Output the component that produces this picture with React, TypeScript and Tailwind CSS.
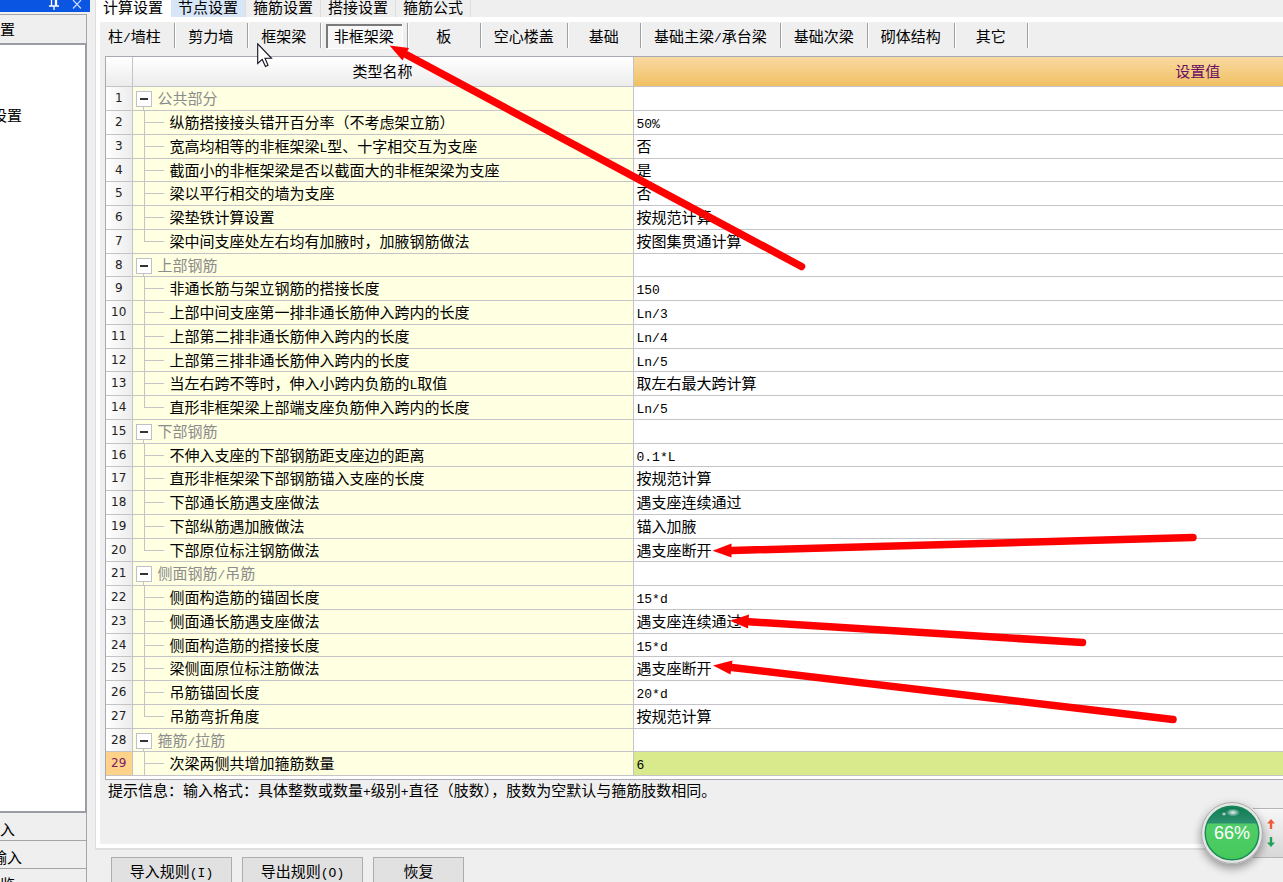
import { Fragment, useState } from "react";
import clsx from "clsx";

type Row = {
  name: string;
  value?: string;
  group?: boolean;
};

const mainTabs = ["计算设置", "节点设置", "箍筋设置", "搭接设置", "箍筋公式"];

const memberTypes = [
  "柱/墙柱",
  "剪力墙",
  "框架梁",
  "非框架梁",
  "板",
  "空心楼盖",
  "基础",
  "基础主梁/承台梁",
  "基础次梁",
  "砌体结构",
  "其它",
];

const rows: Row[] = [
  { name: "公共部分", group: true },
  { name: "纵筋搭接接头错开百分率（不考虑架立筋）", value: "50%" },
  { name: "宽高均相等的非框架梁L型、十字相交互为支座", value: "否" },
  { name: "截面小的非框架梁是否以截面大的非框架梁为支座", value: "是" },
  { name: "梁以平行相交的墙为支座", value: "否" },
  { name: "梁垫铁计算设置", value: "按规范计算" },
  { name: "梁中间支座处左右均有加腋时，加腋钢筋做法", value: "按图集贯通计算" },
  { name: "上部钢筋", group: true },
  { name: "非通长筋与架立钢筋的搭接长度", value: "150" },
  { name: "上部中间支座第一排非通长筋伸入跨内的长度", value: "Ln/3" },
  { name: "上部第二排非通长筋伸入跨内的长度", value: "Ln/4" },
  { name: "上部第三排非通长筋伸入跨内的长度", value: "Ln/5" },
  { name: "当左右跨不等时，伸入小跨内负筋的L取值", value: "取左右最大跨计算" },
  { name: "直形非框架梁上部端支座负筋伸入跨内的长度", value: "Ln/5" },
  { name: "下部钢筋", group: true },
  { name: "不伸入支座的下部钢筋距支座边的距离", value: "0.1*L" },
  { name: "直形非框架梁下部钢筋锚入支座的长度", value: "按规范计算" },
  { name: "下部通长筋遇支座做法", value: "遇支座连续通过" },
  { name: "下部纵筋遇加腋做法", value: "锚入加腋" },
  { name: "下部原位标注钢筋做法", value: "遇支座断开" },
  { name: "侧面钢筋/吊筋", group: true },
  { name: "侧面构造筋的锚固长度", value: "15*d" },
  { name: "侧面通长筋遇支座做法", value: "遇支座连续通过" },
  { name: "侧面构造筋的搭接长度", value: "15*d" },
  { name: "梁侧面原位标注筋做法", value: "遇支座断开" },
  { name: "吊筋锚固长度", value: "20*d" },
  { name: "吊筋弯折角度", value: "按规范计算" },
  { name: "箍筋/拉筋", group: true },
  { name: "次梁两侧共增加箍筋数量", value: "6" },
];

// Latin runs use a narrow mono face, half the width of a Chinese character
function Mixed({ text }: { text: string }) {
  return (
    <>
      {text.split(/([\x21-\x7e]+)/).map((part, i) =>
        i % 2 === 1 ? (
          <span
            key={i}
            className="font-['Liberation_Mono',monospace] text-[13px] leading-none"
          >
            {part}
          </span>
        ) : (
          <Fragment key={i}>{part}</Fragment>
        )
      )}
    </>
  );
}

function Sidebar() {
  return (
    <aside className="flex w-[90px] shrink-0 flex-col">
      <div className="flex h-3 items-start justify-end gap-3 bg-[#0a55e2] pr-2 text-white">
        <svg width="12" height="10" viewBox="0 0 12 10" fill="none" stroke="currentColor">
          <path d="M3.5 0V5.5M7.5 0V5.5M8.5 0V5.5M1 6H11M6 6V10" strokeWidth="1.3" />
        </svg>
        <svg width="10" height="9" viewBox="0 0 10 9" fill="none" stroke="#c9dcff">
          <path d="M1 0L9 8.5M9 0L1 8.5" strokeWidth="1.2" />
        </svg>
      </div>
      <div className="mr-[3px] flex flex-1 flex-col">
        <button className="mt-0.5 h-[29px] overflow-hidden border-t border-r border-[#a5a5a5] bg-[#efefef] text-left">
          置
        </button>
        <div className="flex-1 overflow-hidden border-t-2 border-r-2 border-b-2 border-[#9a9da3] bg-white pt-[60px]">
          <a href="#calc" className="-ml-2 block">
            设置
          </a>
        </div>
        <div className="h-[69px] overflow-hidden border-r border-[#a5a5a5]">
          <button className="block h-7 w-full border-b border-[#a5a5a5] pt-1 text-left">入</button>
          <button className="block h-7 w-full border-b border-[#a5a5a5] pt-1 text-left">
            <span className="-ml-2">输入</span>
          </button>
          <button className="block h-7 w-full pt-0.5 text-left">览</button>
        </div>
      </div>
    </aside>
  );
}

function TreeLine({ last }: { last: boolean }) {
  return (
    <span className="mr-1.5 ml-[11px] flex w-5 shrink-0 flex-col">
      <span className="h-3 border-b border-l border-[#c4c4c4]" />
      <span className={clsx("flex-1", !last && "border-l border-[#c4c4c4]")} />
    </span>
  );
}

function GroupToggle({ label }: { label: string }) {
  return (
    <span className="mr-1.5 ml-[3px] flex flex-col items-center pt-1">
      <button
        aria-label={label}
        className="flex size-4 shrink-0 items-center justify-center border border-[#c0c0cc] bg-white"
      >
        <span className="h-[2px] w-2 bg-[#333]" />
      </button>
      <span className="w-px flex-1 bg-[#c4c4c4]" />
    </span>
  );
}

function SettingsTable() {
  const [selected, setSelected] = useState(28);

  return (
    <div className="ml-[5px] overflow-hidden border-t border-b border-l border-[#a9a9b4] bg-white pb-[3px]">
      <table className="w-[1657px] table-fixed border-collapse">
        <colgroup>
          <col className="w-[26px]" />
          <col className="w-[501px]" />
          <col />
        </colgroup>
        <thead>
          <tr className="h-[29px] *:border-r *:border-b *:border-[#c3c3c8] *:p-0 *:font-normal">
            <th className="bg-linear-to-b from-white to-[#ececec]" />
            <th className="bg-linear-to-b from-white to-[#ececec]">类型名称</th>
            <th className="bg-linear-to-b from-[#f9d9a0] to-[#f0c062] text-[#6a0f62]">设置值</th>
          </tr>
        </thead>
        <tbody>
          {rows.map((row, i) => {
            const active = i === selected;
            const last = i < rows.length - 1 && !!rows[i + 1].group;
            const cell = clsx(
              "flex overflow-hidden border-b border-[#c3c3c8] whitespace-nowrap",
              i % 4 === 3 ? "h-[23px]" : "h-6"
            );
            return (
              <tr key={i} onClick={() => setSelected(i)} className="*:p-0">
                <td
                  className={clsx(
                    "border-r border-[#c3c3c8]",
                    active
                      ? "bg-[#ffd28a] text-[#7a2060]"
                      : "bg-linear-to-r from-white to-[#ececec] text-[#222]"
                  )}
                >
                  <div
                    className={clsx(
                      cell,
                      "items-center justify-center font-['DejaVu_Sans',sans-serif] text-[12px]"
                    )}
                  >
                    {i + 1}
                  </div>
                </td>
                <td className="border-r border-[#c3c3c8] bg-[#ffffe1]">
                  <div className={cell}>
                    {row.group ? <GroupToggle label={row.name} /> : <TreeLine last={last} />}
                    <span className={clsx("self-center", row.group && "text-[#8c8c8c]")}>
                      <Mixed text={row.name} />
                    </span>
                  </div>
                </td>
                <td className={active ? "bg-[#d9ea8c]" : "bg-white"}>
                  <div className={clsx(cell, "items-center pl-[3px]")}>
                    <span>
                      <Mixed text={row.value ?? ""} />
                    </span>
                  </div>
                </td>
              </tr>
            );
          })}
        </tbody>
      </table>
    </div>
  );
}

// Red hand-placed arrows pointing at the important settings
function Annotations() {
  return (
    <svg
      className="pointer-events-none absolute top-0 left-0"
      width="1283"
      height="882"
      viewBox="0 0 1283 882"
      fill="#ff0000"
      stroke="#ff0000"
      strokeLinecap="round"
    >
      <g strokeWidth="7.5">
        <path d="M801.5 266.5L407 55" />
        <path d="M1193 537.5L732 550.5" />
        <path d="M1082.5 642.5L749 621.8" />
        <path d="M1173 719.5L732 667.5" />
      </g>
      <g stroke="none">
        <path d="M389.5 45.5L409 48L402.5 60.5Z" />
        <path d="M712.5 550.7L731.5 543.5V557.5Z" />
        <path d="M730 620.7L749 614.5L748 628.5Z" />
        <path d="M713 665.5L732.5 660.5L730.5 674.5Z" />
      </g>
    </svg>
  );
}

function Cursor() {
  return (
    <svg
      className="pointer-events-none absolute top-[43px] left-[257px]"
      width="16"
      height="25"
      viewBox="0 0 16 25"
    >
      <path
        d="M.7 .8V20.5L5.2 16.4L8.5 23.5L11 22.3L8 15.3H14.5Z"
        fill="#fff"
        stroke="#111122"
        strokeWidth="1.1"
      />
    </svg>
  );
}

function SpeedBall() {
  return (
    <div className="absolute right-0 bottom-[18px] flex items-center">
      <div className="relative z-10 -mr-2.5 flex size-[62px] items-center justify-center rounded-full shadow-[0_4px_10px_rgba(0,0,0,0.4)]">
        <svg className="absolute inset-0" width="62" height="62" viewBox="0 0 62 62">
          <defs>
            <linearGradient id="ballTop" x1="0" y1="0" x2="0" y2="1">
              <stop offset="0" stopColor="#0d7a55" />
              <stop offset="1" stopColor="#2f9070" />
            </linearGradient>
            <linearGradient id="ballBody" x1="0" y1="0" x2="0" y2="1">
              <stop offset="0" stopColor="#56cf70" />
              <stop offset="1" stopColor="#45c95a" />
            </linearGradient>
            <radialGradient id="ballShine">
              <stop offset="0" stopColor="#fff" stopOpacity="0.9" />
              <stop offset="1" stopColor="#fff" stopOpacity="0" />
            </radialGradient>
          </defs>
          <circle cx="31" cy="31" r="30.5" fill="#e6e6e6" stroke="#a8a8a8" />
          <circle cx="31" cy="31" r="27" fill="url(#ballBody)" />
          <path d="M5.8 21.5A27 27 0 0 1 56.2 21.5Z" fill="url(#ballTop)" />
          <circle cx="31" cy="31" r="26.8" fill="none" stroke="#188a58" strokeWidth="1.4" />
          <ellipse cx="32" cy="10.5" rx="7" ry="4" fill="url(#ballShine)" />
          <ellipse cx="23" cy="12" rx="2.5" ry="2" fill="url(#ballShine)" />
        </svg>
        <span className="relative font-['Liberation_Sans',sans-serif] text-lg text-white">66%</span>
      </div>
      <div className="flex h-[50px] w-[30px] flex-col items-center justify-center gap-2 border-t border-b border-[#b5b5b5] bg-linear-to-b from-[#f7f7f7] to-[#d8d8d8] pl-1.5">
        <svg width="8" height="10" viewBox="0 0 8 10" fill="#ee5a3c">
          <path d="M4 0L8 4.5H5.2V10H2.8V4.5H0Z" />
        </svg>
        <svg width="8" height="10" viewBox="0 0 8 10" fill="#1fa35a">
          <path d="M4 10L8 5.5H5.2V0H2.8V5.5H0Z" />
        </svg>
      </div>
    </div>
  );
}

export default function App() {
  const [member, setMember] = useState("非框架梁");

  return (
    <div className="relative flex h-screen overflow-hidden bg-[#efefef] font-['Noto_Sans_CJK_SC',sans-serif] text-[15px] leading-5 text-black">
      <Sidebar />

      <main className="ml-[5px] flex min-w-0 flex-1 flex-col">
        <div className="border-b-2 border-l border-[#dedede]">
          <nav className="flex h-[17px] items-end overflow-hidden">
            {mainTabs.map((tab, i) => (
              <button
                key={tab}
                className={clsx(
                  "h-5 shrink-0 border-r px-[7px] whitespace-nowrap",
                  i === 0 && "border-white bg-white",
                  i === 1 && "border-[#dedede] bg-[#d6e6f7]",
                  i > 1 && "border-[#dedede]"
                )}
              >
                {tab}
              </button>
            ))}
          </nav>

          <div className="border-t-[5px] border-b-4 border-l-4 border-white bg-[#efefef]">
            <nav className="flex h-[34px] items-start pt-px">
              {memberTypes.map((type, i) => {
                const active = type === member;
                return (
                  <button
                    key={type}
                    onClick={() => setMember(type)}
                    className={clsx(
                      "h-[25px] min-w-[73px] shrink-0 border-r border-[#a0a0a0] whitespace-nowrap shadow-[1px_0_0_white]",
                      active ? "px-[5px]" : i === 0 ? "pr-[13px] pl-2" : "px-[13px]"
                    )}
                  >
                    {active ? (
                      <span className="block h-6 border-t-2 border-l-2 border-[#7a7a7a] bg-[#f7f7f7] pr-2 pl-1.5 shadow-[1px_1px_0_white]">
                        <Mixed text={type} />
                      </span>
                    ) : (
                      <Mixed text={type} />
                    )}
                  </button>
                );
              })}
            </nav>

            <SettingsTable />

            <p className="h-16 whitespace-nowrap pl-2">
              <Mixed text="提示信息：输入格式：具体整数或数量+级别+直径（肢数），肢数为空默认与箍筋肢数相同。" />
            </p>
          </div>
        </div>

        <div className="flex gap-2.5 pt-[7px] pl-4">
          <button className="h-7 w-[121px] shrink-0 border border-[#adadad] bg-[#e1e1e1]">
            <Mixed text="导入规则(I)" />
          </button>
          <button className="h-7 w-[121px] shrink-0 border border-[#adadad] bg-[#e1e1e1]">
            <Mixed text="导出规则(O)" />
          </button>
          <button className="h-7 w-[91px] shrink-0 border border-[#adadad] bg-[#e1e1e1]">
            恢复
          </button>
        </div>
      </main>

      <Annotations />
      <Cursor />
      <SpeedBall />
    </div>
  );
}
